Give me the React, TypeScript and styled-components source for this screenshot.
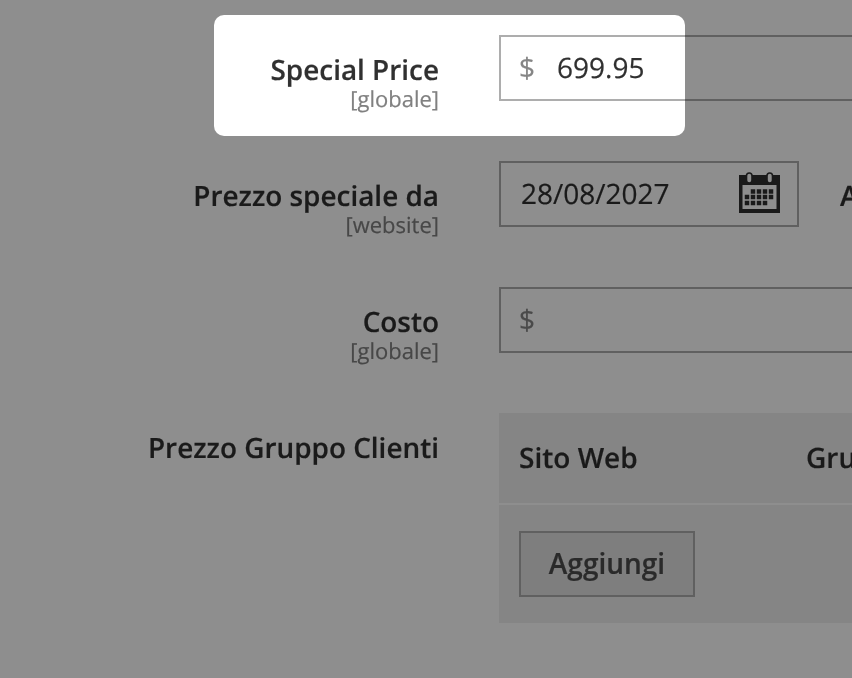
import React from 'react'
import styled, { createGlobalStyle } from 'styled-components'

const GlobalStyle = createGlobalStyle`
  html, body {
    margin: 0;
    padding: 0;
    background: #ffffff;
    overflow: hidden;
  }
  body {
    font-family: "Open Sans", "Liberation Sans", sans-serif;
    color: #303030;
    text-rendering: geometricPrecision;
    -webkit-text-stroke: 0.2px;
  }
`

const Page = styled.div`
  width: 852px;
  height: 678px;
  overflow: hidden;
  position: relative;
  padding-top: 35px;
  box-sizing: border-box;
  filter: grayscale(1);
`

const FieldRow = styled.div`
  display: flex;
  align-items: flex-start;
  width: 1400px;
  height: 66px;
  margin-bottom: 60px;
`

const LabelCell = styled.div`
  width: 439px;
  flex-shrink: 0;
  margin-right: 60px;
  display: flex;
  flex-direction: column;
  align-items: flex-end;
  padding-top: 16px;
`

const LabelText = styled.label`
  font-size: 27.9px;
  font-weight: 600;
  line-height: 38px;
  color: #303030;
  white-space: nowrap;
`

const Scope = styled.span`
  font-size: 22px;
  line-height: 20px;
  color: #808080;
  white-space: nowrap;
`

const InputBox = styled.div<{ $width: number }>`
  width: ${(p) => p.$width}px;
  height: 66px;
  box-sizing: border-box;
  flex-shrink: 0;
  border: 2px solid #adadad;
  background: #ffffff;
  display: flex;
  align-items: center;
  padding: 0 16px 0 20px;
  font-size: 28px;
  color: #303030;
`

const Prefix = styled.span`
  color: #858585;
  width: 38px;
  margin-left: -2px;
  flex-shrink: 0;
`

const DateValue = styled.span`
  flex: 1;
`

const ToLabel = styled.span`
  font-size: 28px;
  font-weight: 600;
  line-height: 38px;
  margin: 16px 0 0 41px;
  color: #303030;
`

const GroupTable = styled.div`
  width: 900px;
  flex-shrink: 0;
  background: #efefef;
`

const TableHead = styled.div`
  height: 90px;
  display: grid;
  grid-template-columns: 287px 1fr;
  align-items: center;
  padding-left: 20px;
  font-size: 28px;
  font-weight: 600;
  color: #303030;
`

const TableBody = styled.div`
  height: 120px;
  padding: 26px 20px 0;
  box-sizing: border-box;
  border-top: 2px solid #ffffff;
`

const AddButton = styled.button`
  width: 176px;
  height: 66px;
  box-sizing: border-box;
  border: 2px solid #adadad;
  background: #e3e3e3;
  color: #4c4c4c;
  font-family: inherit;
  font-size: 28px;
  font-weight: 600;
  padding: 0 0 2px;
`

const Spotlight = styled.div`
  position: absolute;
  z-index: 10;
  left: 214px;
  top: 15px;
  width: 471px;
  height: 121px;
  border-radius: 10px;
  box-shadow: 0 0 0 2000px rgba(0, 0, 0, 0.443);
  pointer-events: none;
`

const CalendarSvg = styled.svg`
  flex-shrink: 0;
  margin-bottom: 3px;
`

const calendarCells = [
  [14, 19.5], [20, 19.5], [26, 19.5], [32, 19.5],
  [8, 25], [14, 25], [20, 25], [26, 25], [32, 25],
  [8, 31], [14, 31], [20, 31], [26, 31],
]

const CalendarIcon = () => (
  <CalendarSvg width="42" height="42" viewBox="0 0 42 42">
    <path fill="#303030" fillRule="evenodd" d="M0 3h41v38H0zM3.5 13v24h34V13z" />
    <rect x="7.5" y="1" width="5.5" height="10" rx="2.75" fill="#ffffff" stroke="#303030" strokeWidth="1.6" />
    <rect x="28" y="1" width="5.5" height="10" rx="2.75" fill="#ffffff" stroke="#303030" strokeWidth="1.6" />
    <g fill="#303030">
      {calendarCells.map(([x, y]) => (
        <rect key={`${x}-${y}`} x={x - 2.25} y={y - 2.25} width="4.5" height="4.5" />
      ))}
    </g>
  </CalendarSvg>
)

export default function App() {
  return (
    <Page>
      <GlobalStyle />
      <FieldRow>
        <LabelCell>
          <LabelText>Special Price</LabelText>
          <Scope>[globale]</Scope>
        </LabelCell>
        <InputBox $width={600}>
          <Prefix>$</Prefix>
          699.95
        </InputBox>
      </FieldRow>
      <FieldRow>
        <LabelCell>
          <LabelText>Prezzo speciale da</LabelText>
          <Scope>[website]</Scope>
        </LabelCell>
        <InputBox $width={300}>
          <DateValue>28/08/2027</DateValue>
          <CalendarIcon />
        </InputBox>
        <ToLabel>A</ToLabel>
      </FieldRow>
      <FieldRow>
        <LabelCell>
          <LabelText>Costo</LabelText>
          <Scope>[globale]</Scope>
        </LabelCell>
        <InputBox $width={600}>
          <Prefix>$</Prefix>
        </InputBox>
      </FieldRow>
      <FieldRow>
        <LabelCell>
          <LabelText>Prezzo Gruppo Clienti</LabelText>
        </LabelCell>
        <GroupTable>
          <TableHead>
            <span>Sito Web</span>
            <span>Gruppo Clienti</span>
          </TableHead>
          <TableBody>
            <AddButton>Aggiungi</AddButton>
          </TableBody>
        </GroupTable>
      </FieldRow>
      <Spotlight />
    </Page>
  )
}
